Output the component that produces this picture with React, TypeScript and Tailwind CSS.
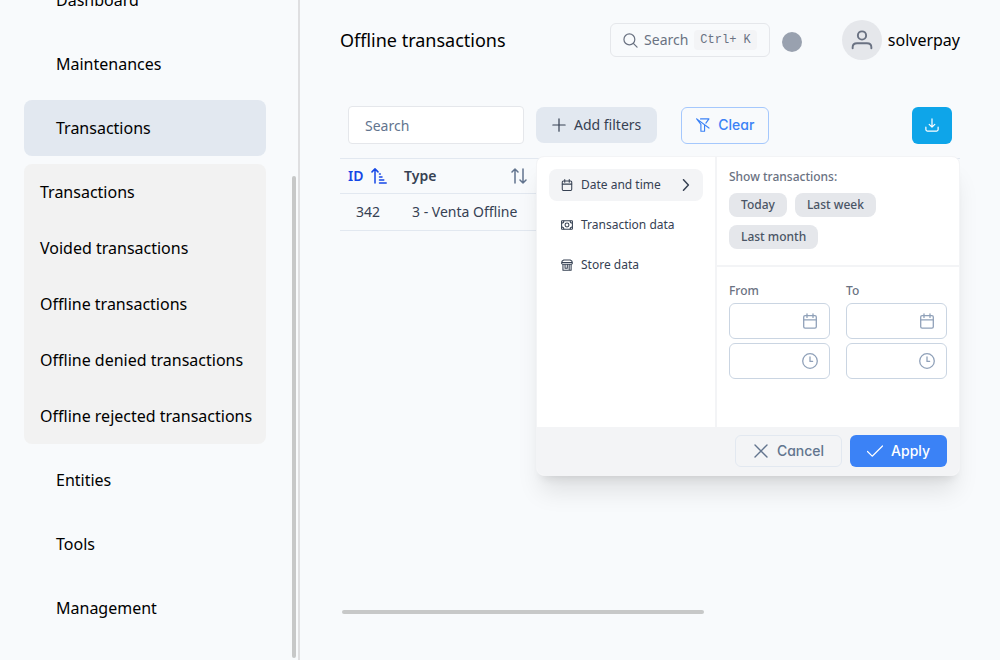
import type { ReactNode } from "react";

type IconProps = { className?: string; children: ReactNode; width?: number };

function Icon({ className = "size-4", children, width = 1 }: IconProps) {
  return (
    <svg
      viewBox="0 0 16 16"
      className={`shrink-0 ${className}`}
      fill="none"
      stroke="currentColor"
      strokeWidth={width}
      strokeLinecap="round"
      strokeLinejoin="round"
      aria-hidden="true"
    >
      {children}
    </svg>
  );
}

const CalendarIcon = ({ className, width }: { className?: string; width?: number }) => (
  <Icon className={className} width={width}>
    <rect x="1.7" y="2.6" width="12.6" height="12.6" rx="1.4" />
    <path d="M1.7 6.8h12.6M5 .8v3.6M11 .8v3.6" />
  </Icon>
);

const ClockIcon = ({ className }: { className?: string }) => (
  <Icon className={className} width={1.3}>
    <circle cx="8" cy="8" r="7.3" />
    <path d="M8 4v4.4h2.6" />
  </Icon>
);

const MoneyIcon = () => (
  <Icon className="size-3" width={1.4}>
    <rect x=".8" y="2.4" width="14.4" height="11.2" rx=".6" />
    <circle cx="8" cy="8" r="2.6" />
    <path d="M1 5.4c1.6 0 2.8-1 2.8-2.8M15 5.4c-1.6 0-2.8-1-2.8-2.8M1 10.6c1.6 0 2.8 1 2.8 2.8M15 10.6c-1.6 0-2.8 1-2.8 2.8" />
  </Icon>
);

const StoreIcon = () => (
  <Icon className="size-3" width={1.4}>
    <path d="M3.6 1.2h8.8c1.600.6 2.800 2.200 2.800 4.200 0 1-.8 1.600-1.800 1.600H2.600C1.600 7 .8 6.400.8 5.400c0-2 1.200-3.600 2.800-4.200zM1.200 4.600h13.600" />
    <path d="M2.600 7.200V15h7M5.400 7.200v5h3v-5M10.900 7.200V15h2.600V7.200" />
  </Icon>
);

const menuTop = ["Dashboard", "Maintenances"];
const menuBottom = ["Entities", "Tools", "Management"];
const subMenu = [
  "Transactions",
  "Voided transactions",
  "Offline transactions",
  "Offline denied transactions",
  "Offline rejected transactions",
];

function MenuLink({ label, active = false }: { label: string; active?: boolean }) {
  return (
    <a
      href="#"
      className={`flex h-14 shrink-0 items-center rounded-lg px-8 ${active ? "bg-slate-200" : ""}`}
    >
      {label}
    </a>
  );
}

function Sidebar() {
  return (
    <aside className="relative flex h-screen w-75 shrink-0 flex-col justify-end overflow-hidden border-r-2 border-[#dfdfe1] pr-8 pb-6 pl-6">
      <nav className="flex flex-col gap-2 text-base text-black">
        {menuTop.map((label) => (
          <MenuLink key={label} label={label} />
        ))}
        <MenuLink label="Transactions" active />
        <div className="flex shrink-0 flex-col rounded-lg bg-[#f2f2f2]">
          {subMenu.map((label) => (
            <a key={label} href="#" className="flex h-14 items-center px-4 whitespace-nowrap">
              {label}
            </a>
          ))}
        </div>
        {menuBottom.map((label) => (
          <MenuLink key={label} label={label} />
        ))}
      </nav>
      <div className="absolute top-44 right-0.5 bottom-0.5 w-1 rounded-full bg-[#c7c8c8]" />
    </aside>
  );
}

function Header() {
  return (
    <header className="flex h-20 items-center">
      <h1 className="grow text-lg text-black">Offline transactions</h1>
      <button
        type="button"
        className="flex h-[34px] items-center rounded-md border border-gray-200 px-3 text-sm text-gray-500"
      >
        <Icon className="size-[15px]" width={1.3}>
          <circle cx="6.8" cy="6.8" r="5.800" />
          <path d="M11 11l4 4" />
        </Icon>
        <span className="ml-1.5">Search</span>
        <kbd className="ml-1.5 rounded-sm bg-gray-100 px-1.5 font-['Liberation_Mono',monospace] text-xs leading-5 whitespace-pre">
          Ctrl+ K
        </kbd>
      </button>
      <button type="button" aria-label="Status" className="mt-1 ml-3 size-5 rounded-full bg-gray-400" />
      <a href="#" className="ml-10 flex items-center gap-1.5 text-base text-black">
        <span className="flex size-10 items-center justify-center rounded-full bg-gray-200 text-gray-500">
          <Icon className="size-[22px]" width={1.4}>
            <circle cx="8" cy="4.700" r="3" />
            <path d="M1.200 14v-.8c0-1.800 1.400-2.900 3.200-2.900h7.200c1.800 0 3.200 1.100 3.200 2.900v.8" />
          </Icon>
        </span>
        solverpay
      </a>
    </header>
  );
}

function Toolbar() {
  return (
    <div className="flex items-center px-2">
      <input
        type="text"
        aria-label="Search transactions"
        placeholder="Search"
        className="h-[38px] w-44 rounded-sm border border-gray-200 bg-white px-4 text-sm placeholder:text-slate-500"
      />
      <button
        type="button"
        className="ml-3 flex h-9 items-center gap-2 rounded-lg bg-slate-200 px-4 text-sm text-gray-700"
      >
        <Icon className="size-3.5" width={1.400}>
          <path d="M8 1v14M1 8h14" />
        </Icon>
        Add filters
      </button>
      <button
        type="button"
        className="ml-6 flex h-[37px] items-center gap-2 rounded-md border border-[#a5c8fd] px-3.5 font-['Inter',sans-serif] text-sm font-medium text-[#3b82f6] [font-feature-settings:'cv11']"
      >
        <Icon className="size-3.5" width={1.300}>
          <path d="M.8 1l14 10.500M.8 1l4.800 6.200v7.900h4.200V8.300M5.200 1h9.600l-3.500 4.800" />
        </Icon>
        Clear
      </button>
      <div className="grow" />
      <button
        type="button"
        aria-label="Download"
        className="flex h-[37px] w-10 items-center justify-center rounded-md bg-[#0ea5e9] text-white"
      >
        <Icon className="size-3.5" width={1.400}>
          <path d="M8 1v9.300M4.800 7.300L8 10.500l3.200-3.200M1 10.500v2.700c0 1 .7 1.700 1.700 1.700h10.600c1 0 1.700-.7 1.700-1.700v-2.700" />
        </Icon>
      </button>
    </div>
  );
}

function TransactionsTable() {
  return (
    <table className="w-full border-collapse text-left text-sm text-gray-700">
      <thead>
        <tr className="h-[35px] border-y border-slate-200">
          <th scope="col" className="w-14 px-2 py-0 font-semibold text-blue-700">
            <span className="flex items-center gap-2">
              ID
              <Icon className="size-4" width={1.500}>
                <path d="M4 15V.9M1 3.900L4 .9l3 3M8.500 6h.8M8.500 9h2.500M8.500 12h4.300M8.500 15h6.700" />
              </Icon>
            </span>
          </th>
          <th scope="col" className="px-2 py-0 font-semibold">
            <span className="flex w-[123px] items-center justify-between">
              Type
              <Icon className="size-4 text-slate-500" width={1.500}>
                <path d="M4 15V1M1 4l3-3 3 3M12 1v14M9 12l3 3 3-3" />
              </Icon>
            </span>
          </th>
        </tr>
      </thead>
      <tbody>
        <tr className="h-[37px] border-b border-slate-200">
          <td className="px-4 py-0">342</td>
          <td className="px-4 py-0">3 - Venta Offline</td>
        </tr>
      </tbody>
    </table>
  );
}

function DateField({ label, id }: { label: string; id: string }) {
  return (
    <div className="flex min-w-0 flex-1 flex-col">
      <label htmlFor={id} className="mb-1 text-xs font-medium text-gray-500">
        {label}
      </label>
      <div className="relative mb-1">
        <input id={id} type="text" className="h-9 w-full rounded-md border border-slate-300 bg-white pr-8 pl-2 text-xs" />
        <CalendarIcon className="absolute top-2.5 right-3 size-4 text-slate-400" width={1.300} />
      </div>
      <div className="relative">
        <input
          type="text"
          aria-label={`${label} time`}
          className="h-9 w-full rounded-md border border-slate-300 bg-white pr-8 pl-2 text-xs"
        />
        <ClockIcon className="absolute top-2.5 right-3 size-4 text-slate-400" />
      </div>
    </div>
  );
}

function FilterPanel() {
  const row = "flex h-8 items-center gap-2 rounded-lg px-3 text-left";
  return (
    <section
      aria-label="Filters"
      className="absolute top-[156px] right-10 w-[424px] overflow-hidden rounded-lg border border-gray-100 bg-white shadow-xl"
    >
      <div className="flex h-[270px]">
        <div className="flex w-[180px] shrink-0 flex-col gap-2 border-r-2 border-gray-100 p-3 text-xs text-gray-700">
          <button type="button" className={`${row} bg-gray-100`}>
            <CalendarIcon className="size-3" width={1.400} />
            <span className="grow">Date and time</span>
            <Icon className="size-3" width={2}>
              <path d="M6 1l6.500 7L6 15" />
            </Icon>
          </button>
          <button type="button" className={row}>
            <MoneyIcon />
            Transaction data
          </button>
          <button type="button" className={row}>
            <StoreIcon />
            Store data
          </button>
        </div>
        <div className="flex min-w-0 grow flex-col">
          <div className="flex h-[110px] shrink-0 flex-col border-b-2 border-gray-100 p-3">
            <h2 className="text-xs font-medium text-gray-500">Show transactions:</h2>
            <div className="mt-2 flex flex-wrap gap-2 text-xs font-medium text-gray-600">
              {["Today", "Last week", "Last month"].map((label) => (
                <button key={label} type="button" className="h-6 rounded-lg bg-gray-200 px-3">
                  {label}
                </button>
              ))}
            </div>
          </div>
          <div className="flex gap-4 px-3 pt-4">
            <DateField label="From" id="from-date" />
            <DateField label="To" id="to-date" />
          </div>
        </div>
      </div>
      <div className="flex h-12 items-center justify-end gap-2 bg-gray-100 px-3 font-['Inter',sans-serif] text-sm font-medium [font-feature-settings:'cv11']">
        <button
          type="button"
          className="flex h-8 items-center gap-2 rounded-md border border-slate-200 px-[17px] text-slate-500"
        >
          <Icon className="size-4" width={1.400}>
            <path d="M2 2l12 12M14 2L2 14" />
          </Icon>
          Cancel
        </button>
        <button type="button" className="flex h-8 items-center gap-2 rounded-md bg-[#3b82f6] px-[17px] text-white">
          <Icon className="size-4" width={1.200}>
            <path d="M.5 8.500l4.700 4.700L15.500 3" />
          </Icon>
          Apply
        </button>
      </div>
    </section>
  );
}

export default function App() {
  return (
    <div className="flex h-screen overflow-hidden bg-slate-50 font-['Noto_Sans',sans-serif]">
      <Sidebar />
      <main className="relative flex min-w-0 grow flex-col px-10">
        <Header />
        <div className="flex grow flex-col pt-[26px] pb-[46px]">
          <Toolbar />
          <div className="mt-3.5 flex grow flex-col justify-between">
            <TransactionsTable />
            <div className="ml-0.5 h-1 w-7/12 rounded-full bg-[#c7c8c8]" />
          </div>
        </div>
        <FilterPanel />
      </main>
    </div>
  );
}
